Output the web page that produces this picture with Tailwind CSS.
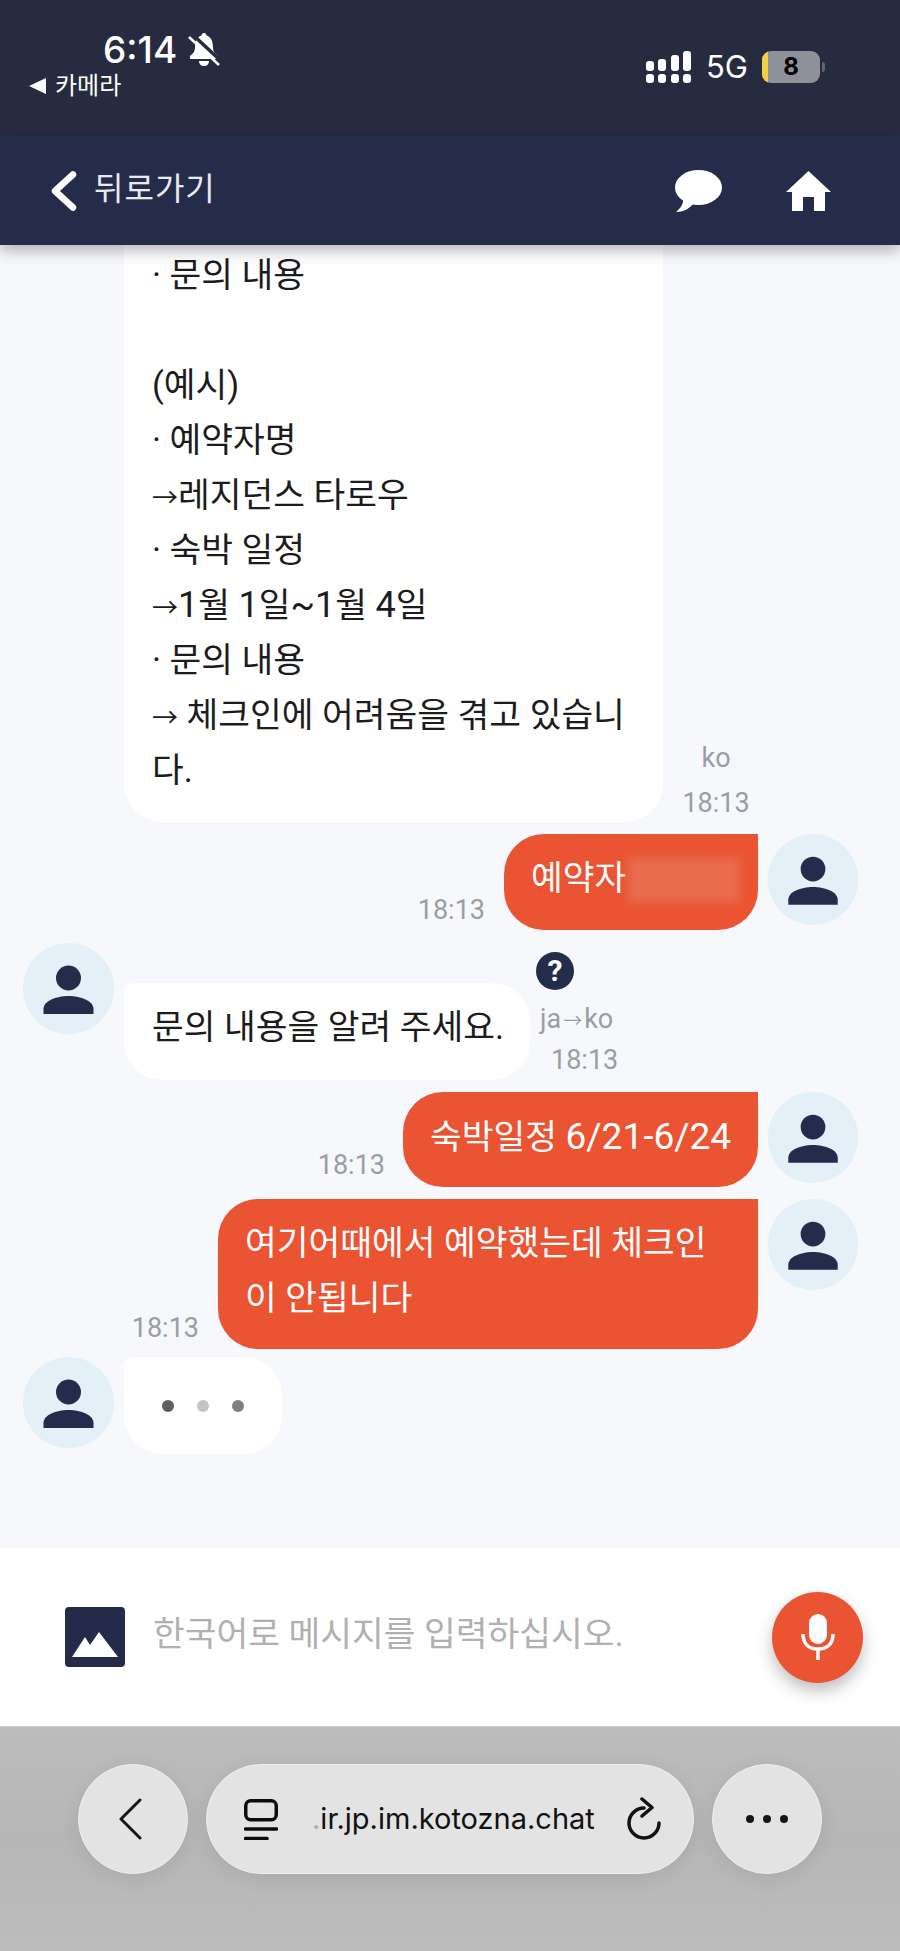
<!DOCTYPE html>
<html lang="ko">
<head>
    <meta charset="UTF-8">
    <meta name="viewport" content="width=device-width, initial-scale=1.0">
    <title>Chat</title>
    <script src="https://cdn.jsdelivr.net/npm/@tailwindcss/browser@4"></script>
</head>
<body class="bg-[#f6f8fc]">
<div class="w-[900px] h-[1951px] flex flex-col overflow-hidden font-['Roboto','Noto_Sans_CJK_KR',sans-serif]">

    <!-- status bar -->
    <div class="h-[136px] shrink-0 bg-[#272b3f] text-white flex justify-between">
        <div class="pl-[29px] pt-[28px]">
            <div class="flex items-center pl-[74px] h-[44px]">
                <span class="font-['Inter',sans-serif] text-[37px] leading-[44px] font-medium">6:14</span>
                <svg class="ml-[11px]" width="32" height="34" viewBox="0 0 32 34" fill="white">
                    <path d="M16 0c-1.500 0-2.500 1-2.500 2.500C8 4 7 10 7 15c0 3-2 6-5 8v3h28v-3c-3-2-5-5-5-8 0-5-1-11-6.500-12.500C18.500 1 17.500 0 16 0z"/>
                    <path d="M11 28h10c0 3-2 5-5 5s-5-2-5-5z"/>
                    <path d="M4 1L33 28" stroke="#272b3f" stroke-width="3.500"/>
                    <path d="M1 4l30 28" stroke="white" stroke-width="2.500"/>
                </svg>
            </div>
            <div class="flex items-center mt-[1px]">
                <svg width="17" height="16" viewBox="0 0 17 16" fill="white"><path d="M0 8L17 0v16z"/></svg>
                <span class="ml-[9px] text-[24px] leading-[26px]">카메라</span>
            </div>
        </div>
        <div class="flex items-center h-[134px] pr-[75px]">
            <div class="flex items-end gap-[4.500px] h-[32px]">
                <div class="flex flex-col gap-[3px] w-[8px]"><span class="h-[10px] rounded-[3px] bg-white"></span><span class="h-[9px] rounded-[3px] bg-white"></span></div>
                <div class="flex flex-col gap-[3px] w-[8px]"><span class="h-[12px] rounded-[3px] bg-white"></span><span class="h-[9px] rounded-[3px] bg-white"></span></div>
                <div class="flex flex-col gap-[3px] w-[8px]"><span class="h-[16px] rounded-[3px] bg-white"></span><span class="h-[9px] rounded-[3px] bg-white"></span></div>
                <div class="flex flex-col gap-[3px] w-[8px]"><span class="h-[20px] rounded-[3px] bg-white"></span><span class="h-[9px] rounded-[3px] bg-white"></span></div>
            </div>
            <span class="ml-[15px] font-['Inter',sans-serif] text-[31px] leading-[36px] w-[42px]">5G</span>
            <div class="ml-[14px] w-[58px] h-[32px] rounded-[9px] bg-[#8f9099] overflow-hidden flex">
                <span class="w-[6px] bg-[#f2cf45]"></span>
                <span class="flex-1 text-center text-black font-bold font-['Inter',sans-serif] text-[24px] leading-[32px] pr-[6px]">8</span>
            </div>
            <span class="ml-[2px] w-[3px] h-[10px] rounded-r-full bg-[#62646f]"></span>
        </div>
    </div>

    <!-- header -->
    <div class="relative z-10 h-[109px] shrink-0 bg-[#242c4a] shadow-[0_6px_14px_rgba(0,0,0,0.28)] flex items-center pl-[51px] pr-[69px] text-[#e9eaef]">
        <svg width="26" height="40" viewBox="0 0 26 40" fill="none" stroke="white" stroke-width="6.500" stroke-linecap="round" stroke-linejoin="round"><path d="M22 3.500L4 20l18 16.500"/></svg>
        <span class="ml-[17px] mb-[4px] text-[32px] leading-[40px] tracking-[1px]">뒤로가기</span>
        <svg class="ml-auto" width="47" height="42" viewBox="0 0 47 42" fill="white"><ellipse cx="23.500" cy="17.500" rx="23.500" ry="17.500"/><path d="M8 28c1 5-2 10-7 14 7 0 13-3 17-8z"/></svg>
        <svg class="ml-[64px]" width="45" height="40" viewBox="0 0 45 40" fill="white"><path d="M22.500 0L45 21h-6v19H28V26H17v14H6V21H0z"/></svg>
    </div>

    <!-- messages -->
    <div class="flex-1 min-h-0 overflow-hidden pl-[23px] pr-[42px]">

        <div class="flex items-end pl-[101px]">
            <div class="w-[539px] bg-white rounded-b-[38px] pl-[28px] pr-[24px] pt-[3px] pb-[24px] text-[34.500px] leading-[55px] text-[#1c1c1e]">
                · 문의 내용<br><br>(예시)<br>· 예약자명<br><span class="text-[26px] leading-none">→</span>레지던스 타로우<br>· 숙박 일정<br><span class="text-[26px] leading-none">→</span><span class="text-[36px] leading-none">1</span>월 <span class="text-[36px] leading-none">1</span>일<span class="text-[36px] leading-none">~1</span>월 <span class="text-[36px] leading-none">4</span>일<br>· 문의 내용<br><span class="text-[26px] leading-none">→</span> 체크인에 어려움을 겪고 있습니다.
            </div>
            <div class="ml-[19px] w-[68px] text-center text-[27px] text-[#9a9da5] pb-[3px]">
                <div class="leading-[32px] mb-[13px]">ko</div>
                <div class="leading-[32px]">18:13</div>
            </div>
        </div>

        <div class="flex justify-end mt-[12px]">
            <span class="self-end mb-[4px] mr-[19px] text-[27px] leading-[32px] text-[#9a9da5]">18:13</span>
            <div class="relative w-[254px] h-[96px] bg-[#ea5433] rounded-tl-[40px] rounded-b-[40px] pl-[27px] pt-[17px] text-[34.500px] leading-[55px] text-white">
                예약자
                <div class="absolute left-[124px] top-[23px] w-[112px] h-[46px] bg-[#e96b4e] blur-[4px]"></div>
            </div>
            <div class="ml-[10px] w-[90px] h-[91px] rounded-full bg-[#e3f0f7] shrink-0">
                <svg width="90" height="91" viewBox="0 0 91 91" fill="#232c4a"><circle cx="45.500" cy="35" r="12.500"/><path d="M20.500 71v-5c0-8 12.500-13 25-13s25 5 25 13v5z"/></svg>
            </div>
        </div>

        <div class="flex items-start mt-[13px]">
            <div class="w-[91px] h-[91px] rounded-full bg-[#e3f0f7] shrink-0">
                <svg width="91" height="91" viewBox="0 0 91 91" fill="#232c4a"><circle cx="45.500" cy="35" r="12.500"/><path d="M20.500 71v-5c0-8 12.500-13 25-13s25 5 25 13v5z"/></svg>
            </div>
            <div class="ml-[10px] mt-[40px] w-[406px] h-[97px] bg-white rounded-[38px] rounded-tl-[10px] pl-[28px] pt-[17px] text-[34.500px] leading-[55px] text-[#1c1c1e] whitespace-nowrap">문의 내용을 알려 주세요.</div>
            <div class="ml-[10px] pt-[9px] flex flex-col">
                <div class="-ml-[4px] w-[38px] h-[38px] rounded-full bg-[#232c4a] text-white text-[30px] leading-[38px] font-bold text-center">?</div>
                <div class="mt-[13px] text-[27px] leading-[32px] text-[#9a9da5]">ja<span class="text-[19px] mx-[2px]">→</span>ko</div>
                <div class="mt-[6px] ml-[11px] text-[27px] leading-[32px] text-[#9a9da5]">18:13</div>
            </div>
        </div>

        <div class="flex justify-end mt-[12px]">
            <span class="self-end mb-[6px] mr-[18px] text-[27px] leading-[32px] text-[#9a9da5]">18:13</span>
            <div class="w-[355px] h-[95px] bg-[#ea5433] rounded-tl-[40px] rounded-b-[40px] pl-[27px] pt-[18px] text-[34.500px] leading-[55px] text-white whitespace-nowrap">숙박일정 <span class="text-[37px] leading-none">6/21-6/24</span></div>
            <div class="ml-[10px] w-[90px] h-[91px] rounded-full bg-[#e3f0f7] shrink-0">
                <svg width="90" height="91" viewBox="0 0 91 91" fill="#232c4a"><circle cx="45.500" cy="35" r="12.500"/><path d="M20.500 71v-5c0-8 12.500-13 25-13s25 5 25 13v5z"/></svg>
            </div>
        </div>

        <div class="flex justify-end mt-[12px]">
            <span class="self-end mb-[5px] mr-[19px] text-[27px] leading-[32px] text-[#9a9da5]">18:13</span>
            <div class="w-[540px] h-[150px] bg-[#ea5433] rounded-tl-[40px] rounded-b-[40px] pl-[27px] pr-[30px] pt-[17px] text-[34.500px] leading-[55px] text-white">여기어때에서 예약했는데 체크인이 안됩니다</div>
            <div class="ml-[10px] w-[90px] h-[91px] rounded-full bg-[#e3f0f7] shrink-0">
                <svg width="90" height="91" viewBox="0 0 91 91" fill="#232c4a"><circle cx="45.500" cy="35" r="12.500"/><path d="M20.500 71v-5c0-8 12.500-13 25-13s25 5 25 13v5z"/></svg>
            </div>
        </div>

        <div class="flex items-start mt-[8px]">
            <div class="w-[91px] h-[91px] rounded-full bg-[#e3f0f7] shrink-0">
                <svg width="91" height="91" viewBox="0 0 91 91" fill="#232c4a"><circle cx="45.500" cy="35" r="12.500"/><path d="M20.500 71v-5c0-8 12.500-13 25-13s25 5 25 13v5z"/></svg>
            </div>
            <div class="ml-[10px] w-[158px] h-[97px] bg-white rounded-[38px] rounded-tl-[10px] flex items-center gap-[23px] pl-[38px]">
                <span class="w-[12px] h-[12px] rounded-full bg-[#5f5f63]"></span>
                <span class="w-[12px] h-[12px] rounded-full bg-[#c4c4c6]"></span>
                <span class="w-[12px] h-[12px] rounded-full bg-[#808084]"></span>
            </div>
        </div>
    </div>

    <!-- input -->
    <div class="h-[178px] shrink-0 bg-white flex items-center pl-[65px] pr-[37px]">
        <svg width="60" height="60" viewBox="0 0 60 60"><rect width="60" height="60" rx="4" fill="#232a4a"/><path d="M7 50l13-20 5 8 9-13 19 25z" fill="white"/></svg>
        <span class="ml-[28px] mb-[4px] flex-1 text-[34.500px] text-[#b0b0b2] whitespace-nowrap">한국어로 메시지를 입력하십시오.</span>
        <div class="w-[91px] h-[91px] rounded-full bg-[#ea5433] shadow-[0_8px_16px_rgba(0,0,0,0.25)] flex items-center justify-center">
            <svg width="36" height="46" viewBox="0 0 36 46" fill="none" stroke="white" stroke-width="3.500"><rect x="9" y="0" width="18" height="30" rx="9" fill="white" stroke="none"/><path d="M3 20c0 10 6 15 15 15s15-5 15-15M18 35v11"/></svg>
        </div>
    </div>

    <!-- browser bar -->
    <div class="h-[225px] shrink-0 bg-linear-to-b from-[#bcbcbc] via-[#b6b6b6] to-[#bcbcbc] border-t border-[#cfcfcf] pt-[37px] pl-[78px] flex items-start gap-[18px]">
        <div class="w-[110px] h-[110px] rounded-full bg-[#e3e3e4] border border-[#efefef] shadow-[0_4px_20px_rgba(0,0,0,0.08)] flex items-center justify-center">
            <svg class="mr-[6px]" width="24" height="42" viewBox="0 0 24 42" fill="none" stroke="#161616" stroke-width="3" stroke-linecap="round" stroke-linejoin="round"><path d="M22 2L3 21l19 19"/></svg>
        </div>
        <div class="w-[488px] h-[110px] rounded-full bg-[#e3e3e4] border border-[#efefef] shadow-[0_4px_20px_rgba(0,0,0,0.08)] flex items-center pl-[37px] pr-[31px]">
            <svg width="34" height="41" viewBox="0 0 34 41" fill="none" stroke="#0c0c0c" stroke-width="3.500" stroke-linecap="round"><rect x="1.750" y="1.750" width="30.500" height="19" rx="5"/><path d="M1.500 30H32.500"/><path d="M1.500 39.500H23"/></svg>
            <span class="ml-[34px] font-['Inter',sans-serif] text-[29px] leading-[36px] text-[#111] whitespace-nowrap"><span class="text-[#aaa]">.</span>ir.jp.im.kotozna.chat</span>
            <svg class="ml-auto" width="36" height="44" viewBox="0 0 36 44" fill="none" stroke="#111" stroke-width="3.500" stroke-linecap="round" stroke-linejoin="round"><path d="M18 11A15 15 0 1 0 33 26"/><path d="M16 2l10 8.500L16 19"/></svg>
        </div>
        <div class="w-[110px] h-[110px] rounded-full bg-[#e3e3e4] border border-[#efefef] shadow-[0_4px_20px_rgba(0,0,0,0.08)] flex items-center justify-center gap-[9px]">
            <span class="w-[8px] h-[8px] rounded-full bg-[#161616]"></span>
            <span class="w-[8px] h-[8px] rounded-full bg-[#161616]"></span>
            <span class="w-[8px] h-[8px] rounded-full bg-[#161616]"></span>
        </div>
    </div>
</div>
</body>
</html>
